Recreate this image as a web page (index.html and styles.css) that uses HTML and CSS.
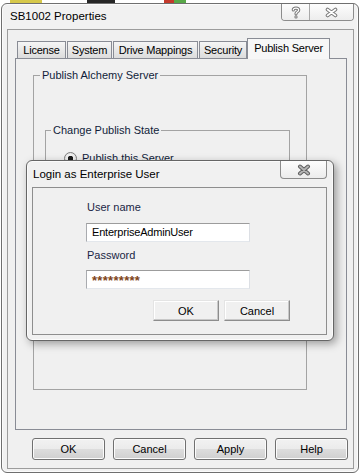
FILE: index.html
```html
<!DOCTYPE html>
<html lang="en">
<head>
    <meta charset="UTF-8">
    <title>SB1002 Properties</title>
    <link rel="stylesheet" href="styles.css">
</head>
<body>
    <div class="desktop">
        <span class="blob blob-yellow"></span>
        <span class="blob blob-dark"></span>
        <span class="blob blob-red"></span>
    </div>

    <div class="window">
        <div class="titlebar">
            <span class="title">SB1002 Properties</span>
            <div class="caption">
                <span class="cap cap-help">
                    <svg width="10" height="13" viewBox="0 0 10 13">
                        <g fill="none" stroke-linecap="round" stroke-linejoin="round">
                            <path d="M2.3 4 C2.3 1.4 7.7 1.4 7.7 4 C7.7 5.8 5 5.8 5 7.8" stroke="#777" stroke-width="3.2"/>
                            <path d="M2.3 4 C2.3 1.4 7.7 1.4 7.7 4 C7.7 5.8 5 5.8 5 7.8" stroke="#fff" stroke-width="1.2"/>
                        </g>
                        <circle cx="5" cy="10.9" r="1.6" fill="#777"/>
                        <circle cx="5" cy="10.9" r="0.6" fill="#fff"/>
                    </svg>
                </span>
                <span class="cap cap-close">
                    <svg width="13" height="11" viewBox="0 0 13 11">
                        <g stroke-linecap="round">
                            <path d="M2.5 2.5 L10.5 8.5 M10.5 2.5 L2.5 8.5" stroke="#7a7a7a" stroke-width="3.6"/>
                            <path d="M2.5 2.5 L10.5 8.5 M10.5 2.5 L2.5 8.5" stroke="#fff" stroke-width="1.6"/>
                        </g>
                    </svg>
                </span>
            </div>
        </div>

        <div class="client">
            <div class="tabs">
                <div class="tab tab-license">License</div>
                <div class="tab tab-system">System</div>
                <div class="tab tab-drive">Drive Mappings</div>
                <div class="tab tab-security">Security</div>
                <div class="tab tab-publish tab-active">Publish Server</div>
            </div>

            <div class="panel">
                <fieldset class="group group-outer">
                    <legend>Publish Alchemy Server</legend>
                    <fieldset class="group group-inner">
                        <legend>Change Publish State</legend>
                        <label class="radio"><span class="radio-dot"></span>Publish this Server</label>
                    </fieldset>
                </fieldset>
            </div>

            <div class="buttons">
                <button class="btn">OK</button>
                <button class="btn">Cancel</button>
                <button class="btn">Apply</button>
                <button class="btn">Help</button>
            </div>
        </div>
    </div>

    <!-- modal login dialog on top of the property sheet -->
    <div class="dialog">
        <div class="dialog-titlebar">
            <span class="dialog-title">Login as Enterprise User</span>
            <span class="dialog-close">
                <svg width="14" height="12" viewBox="0 0 14 12">
                    <g stroke-linecap="round">
                        <path d="M3 2.5 L11 9.5 M11 2.5 L3 9.5" stroke="#5e5e5e" stroke-width="4"/>
                        <path d="M3 2.5 L11 9.5 M11 2.5 L3 9.5" stroke="#b4b4b4" stroke-width="2"/>
                    </g>
                </svg>
            </span>
        </div>
        <div class="dialog-client">
            <div class="field-label">User name</div>
            <div class="textbox">EnterpriseAdminUser</div>
            <div class="field-label field-label-pw">Password</div>
            <div class="textbox textbox-pw">*********</div>
            <div class="dialog-buttons">
                <button class="flat-btn">OK</button>
                <button class="flat-btn">Cancel</button>
            </div>
        </div>
    </div>
</body>
</html>
```

FILE: styles.css
```css
body {
    margin: 0;
    width: 364px;
    height: 475px;
    overflow: hidden;
    position: relative;
    background: #fff;
    font-family: "Liberation Sans", Arial, sans-serif;
    font-size: 11px;
    color: #000;
}

.desktop {
    display: flex;
    height: 3px;
}

.blob-yellow {
    margin-left: 10px;
    width: 32px;
    background: #d6c84a;
}

.blob-dark {
    margin-left: 45px;
    width: 28px;
    background: #262626;
}

.blob-red {
    margin-left: 49px;
    width: 22px;
    background: linear-gradient(90deg, #c43a2c 0 45%, #58a848 45%);
}

.window {
    margin-left: 1px;
    width: 358px;
    height: 470px;
    box-sizing: border-box;
    border: 1px solid #6f6f6f;
    border-radius: 6px;
    background: #f1f1f1;
    box-shadow: inset 0 0 0 1px #fbfbfb;
    padding: 0 4px 3px 5px;
    display: flex;
    flex-direction: column;
}

.titlebar {
    height: 25px;
    flex: none;
    display: flex;
    align-items: flex-start;
}

.title {
    padding: 4px 0 0 3px;
    line-height: 16px;
    font-size: 11.5px;
}

.caption {
    margin-left: auto;
    display: flex;
    border: 1px solid #8c8c8c;
    border-top: none;
    border-radius: 0 0 4px 4px;
    overflow: hidden;
}

.cap {
    height: 16px;
    display: flex;
    align-items: center;
    justify-content: center;
    background: linear-gradient(#fdfdfd, #ededed);
}

.cap-help {
    width: 27px;
    border-right: 1px solid #a8a8a8;
}

.cap-close {
    width: 43px;
}

.client {
    flex: 1;
    border: 1px solid #9c9c9c;
    background: #f0f0f0;
    padding-top: 8px;
    display: flex;
    flex-direction: column;
}

.tabs {
    height: 20px;
    display: flex;
    align-items: flex-end;
    padding-left: 9px;
}

.tab {
    height: 17px;
    box-sizing: border-box;
    border: 1px solid #898c95;
    border-bottom: none;
    margin-right: 1px;
    background: linear-gradient(#f5f5f5, #dcdcdc);
    text-align: center;
    line-height: 16px;
    letter-spacing: -0.2px;
}

.tab-license { width: 49px; }
.tab-system { width: 45px; }
.tab-drive { width: 85px; }
.tab-security { width: 48px; }
.tab-publish { width: 83px; }

.tab-active {
    height: 21px;
    margin-left: -1px;
    margin-bottom: -1px;
    line-height: 18px;
    background: #f7f7f7;
    position: relative;
    z-index: 1;
}

.panel {
    margin: 0 6px 0 7px;
    height: 372px;
    box-sizing: border-box;
    border: 1px solid #898c95;
    background: #f0f0f0;
    padding: 9px 0 0 17px;
}

.group {
    margin: 0;
    box-sizing: border-box;
    border: 1px solid #a3a3a3;
}

.group legend {
    padding: 0 2px;
    line-height: 15px;
    color: #101d3a;
}

.group-outer {
    width: 274px;
    height: 322px;
    padding: 0 0 0 6px;
}

.group-inner {
    margin: 40px 0 0 5px;
    width: 245px;
    height: 197px;
    padding: 0 0 0 5px;
}

.radio {
    display: flex;
    align-items: center;
    margin: 13px 0 0 13px;
    line-height: 15px;
    color: #101d3a;
}

.radio-dot {
    width: 11px;
    height: 11px;
    margin-right: 5px;
    border: 1px solid #7d7d7d;
    border-radius: 50%;
    background: radial-gradient(circle, #1b1b1b 0 2.5px, #f4f4f4 3px, #dcdcdc);
}

.buttons {
    display: flex;
    gap: 8px;
    padding: 8px 0 0 24px;
}

.btn {
    width: 73px;
    height: 22px;
    padding: 0;
    border: 1px solid #707070;
    border-radius: 3px;
    background: linear-gradient(#f2f2f2, #ebebeb 50%, #dddddd 50%, #cfcfcf);
    box-shadow: inset 0 0 0 1px #fbfbfb;
    font: inherit;
    color: #000;
}

.dialog {
    position: absolute;
    left: 26px;
    top: 160px;
    width: 308px;
    height: 181px;
    box-sizing: border-box;
    border: 1px solid #666;
    border-radius: 6px;
    background: #f1f1f1;
    box-shadow: 3px 3px 8px rgba(0, 0, 0, 0.35), inset 0 0 0 1px #fbfbfb;
    padding: 0 6px 5px 5px;
    display: flex;
    flex-direction: column;
}

.dialog-titlebar {
    height: 26px;
    flex: none;
    display: flex;
    align-items: flex-start;
}

.dialog-title {
    padding: 5px 0 0 1px;
    line-height: 16px;
    font-size: 11.5px;
}

.dialog-close {
    margin-left: auto;
    width: 45px;
    height: 17px;
    display: flex;
    align-items: center;
    justify-content: center;
    border: 1px solid #8c8c8c;
    border-top: none;
    border-radius: 0 0 4px 4px;
    background: linear-gradient(#fdfdfd, #ececec);
}

.dialog-client {
    flex: 1;
    border: 1px solid #8e8e8e;
    background: #f0f0f0;
    padding: 11px 0 0 54px;
}

.field-label {
    line-height: 16px;
    color: #1a2645;
}

.field-label-pw {
    margin-top: 5px;
}

.textbox {
    margin: 8px 0 0 -1px;
    width: 164px;
    height: 19px;
    box-sizing: border-box;
    border: 1px solid;
    border-color: #9c9c9c #dcdfe4 #e3e7ec #a9abaf;
    background: #fff;
    padding-left: 5px;
    line-height: 17px;
    letter-spacing: -0.2px;
}

.textbox-pw {
    margin-top: 7px;
    padding-left: 5px;
    color: #7e4418;
    font-size: 13px;
    font-weight: bold;
    line-height: 19px;
    letter-spacing: 0.3px;
}

.dialog-buttons {
    display: flex;
    gap: 5px;
    margin: 11px 0 0 66px;
}

.flat-btn {
    width: 66px;
    height: 21px;
    padding: 0;
    border: 1px solid;
    border-color: #e4e4e4 #8d8d8d #8d8d8d #e4e4e4;
    background: #f0f0f0;
    box-shadow: inset -1px -1px 0 #c8c8c8, inset 1px 1px 0 #fff;
    font: inherit;
    color: #000;
}
```
